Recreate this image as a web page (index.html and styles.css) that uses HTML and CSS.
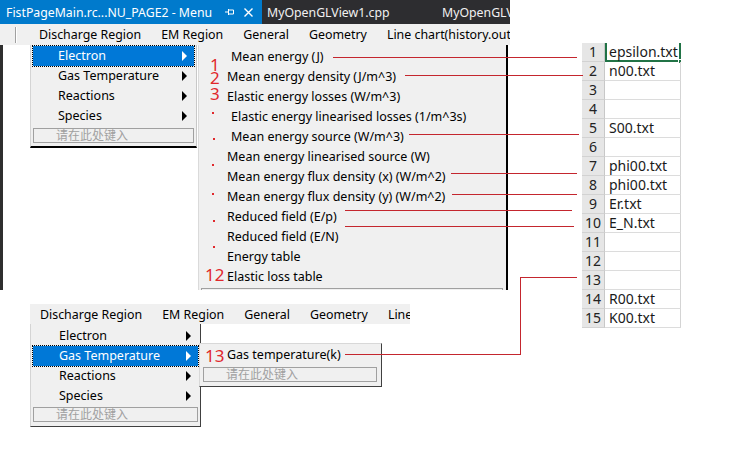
FILE: index.html
```html
<!DOCTYPE html>
<html>
<head>
<meta charset="utf-8">
<link rel="stylesheet" href="styles.css">
</head>
<body>
<div class="canvas">
  <section class="win-top">
    <div class="tabbar">
      <div class="tab active">
        <span class="tab-title">FistPageMain.rc...NU_PAGE2 - Menu</span>
        <svg class="pin" width="9" height="8" viewBox="0 0 9 8"><path d="M0 4H3M3.5 1V7M3.5 2H8.5V6H3.5" fill="none" stroke="#fff" stroke-width="1"/></svg>
        <svg class="close" width="9" height="9" viewBox="0 0 9 9"><path d="M0.5 0.5L8.5 8.5M8.5 0.5L0.5 8.5" stroke="#fff" stroke-width="1.4"/></svg>
      </div>
      <div class="tab">MyOpenGLView1.cpp</div>
      <div class="tab last">MyOpenGLView2.cpp</div>
    </div>
    <div class="menubar">
      <span class="sep"></span>
      <span>Discharge Region</span>
      <span>EM Region</span>
      <span>General</span>
      <span>Geometry</span>
      <span>Line chart(history.out)</span>
    </div>
    <div class="work">
      <div class="dropdown d1">
        <div class="dd-item sub selected">Electron</div>
        <div class="dd-item sub">Gas Temperature</div>
        <div class="dd-item sub">Reactions</div>
        <div class="dd-item sub">Species</div>
        <div class="dd-input">请在此处键入</div>
      </div>
      <div class="submenu s1">
        <div class="sm-item ind">Mean energy (J)</div>
        <div class="sm-item">Mean energy density (J/m^3)</div>
        <div class="sm-item">Elastic energy losses (W/m^3)</div>
        <div class="sm-item ind">Elastic energy linearised losses (1/m^3s)</div>
        <div class="sm-item ind">Mean energy source (W/m^3)</div>
        <div class="sm-item">Mean energy linearised source (W)</div>
        <div class="sm-item">Mean energy flux density (x) (W/m^2)</div>
        <div class="sm-item">Mean energy flux density (y) (W/m^2)</div>
        <div class="sm-item">Reduced field (E/p)</div>
        <div class="sm-item">Reduced field (E/N)</div>
        <div class="sm-item">Energy table</div>
        <div class="sm-item">Elastic loss table</div>
        <div class="sm-input"></div>
        <span class="mark m1">1</span>
        <span class="mark m2">2</span>
        <span class="mark m3">3</span>
        <span class="mark m12">12</span>
        <span class="dot d-a"></span>
        <span class="dot d-b"></span>
        <span class="dot d-c"></span>
        <span class="dot d-d"></span>
        <span class="dot d-e"></span>
        <span class="dot d-f"></span>
      </div>
    </div>
  </section>

  <div class="sheet">
    <div class="rh">1</div><div class="cell sel">epsilon.txt<span class="handle"></span></div>
    <div class="rh">2</div><div class="cell">n00.txt</div>
    <div class="rh">3</div><div class="cell"></div>
    <div class="rh">4</div><div class="cell"></div>
    <div class="rh">5</div><div class="cell">S00.txt</div>
    <div class="rh">6</div><div class="cell"></div>
    <div class="rh">7</div><div class="cell">phi00.txt</div>
    <div class="rh">8</div><div class="cell">phi00.txt</div>
    <div class="rh">9</div><div class="cell">Er.txt</div>
    <div class="rh">10</div><div class="cell">E_N.txt</div>
    <div class="rh">11</div><div class="cell"></div>
    <div class="rh">12</div><div class="cell"></div>
    <div class="rh">13</div><div class="cell"></div>
    <div class="rh">14</div><div class="cell">R00.txt</div>
    <div class="rh">15</div><div class="cell">K00.txt</div>
  </div>

  <section class="win-bottom">
    <div class="menubar mb2">
      <span>Discharge Region</span>
      <span>EM Region</span>
      <span>General</span>
      <span>Geometry</span>
      <span>Line chart(history.out)</span>
    </div>
    <div class="dropdown d2">
      <div class="dd-item sub">Electron</div>
      <div class="dd-item sub selected">Gas Temperature</div>
      <div class="dd-item sub">Reactions</div>
      <div class="dd-item sub">Species</div>
      <div class="dd-input">请在此处键入</div>
    </div>
    <div class="submenu s2">
      <div class="sm-item"><span class="num">13</span>Gas temperature(k)</div>
      <div class="sm-input">请在此处键入</div>
    </div>
  </section>

  <svg class="lines" width="756" height="452" viewBox="0 0 756 452">
    <g fill="none" stroke="#c4262e" stroke-width="1">
      <path d="M333 57.5H577"/>
      <path d="M405 75.5H583"/>
      <path d="M409 134.5H579"/>
      <path d="M451 173.5H577"/>
      <path d="M452 194.5H577"/>
      <path d="M345 210.5H572"/>
      <path d="M345 226.5H574"/>
      <path d="M345 354.5H520.5V277.5H577"/>
    </g>
  </svg>
</div>
</body>
</html>
```

FILE: styles.css
```css
* { box-sizing: border-box; margin: 0; padding: 0; }
html, body { width: 756px; height: 452px; overflow: hidden; background: #fff; }
body { font-family: "Noto Sans", "Noto Sans CJK SC", sans-serif; font-size: 12.5px; color: #000; }
.canvas { position: relative; width: 756px; height: 452px; }

/* top window */
.win-top { position: absolute; left: 0; top: 0; width: 510px; height: 290px; overflow: hidden; }
.tabbar { height: 24px; background: #2d2d30; display: flex; color: #f1f1f1; font-size: 12.3px; white-space: nowrap; }
.tab { display: flex; align-items: center; padding-left: 5px; width: 175px; flex: none; }
.tab.active { background: #007acc; color: #fff; width: 262px; padding-left: 6px; }
.tab .pin { margin-left: auto; }
.tab .close { margin: 0 9px 0 10px; }
.tab.last { width: auto; }

.menubar { height: 21px; background: #f0f0f0; display: flex; align-items: center; gap: 20px; white-space: nowrap; overflow: hidden; font-size: 12.4px; }
.menubar .sep { width: 2px; height: 16px; border-left: 1px solid #a0a0a0; border-right: 1px solid #fff; margin-left: 15px; margin-right: 2px; flex: none; }

.work { position: relative; height: 245px; background: #fff; box-shadow: inset 3px 0 #2f2f2f; }

/* dropdown menus */
.dropdown { position: absolute; background: #f0f0f0; border-left: 1px solid #d4d4d4; border-right: 1px solid #c8c8c8; border-bottom: 2px solid #000; padding: 1px 2px 0 2px; }
.d1 { left: 30px; top: 0; width: 167px; height: 103px; }
.dd-item { position: relative; height: 20px; line-height: 20px; padding-left: 25px; white-space: nowrap; }
.dd-item.sub::after { content: ""; position: absolute; right: 7px; top: 5px; border-left: 5px solid #000; border-top: 5px solid transparent; border-bottom: 5px solid transparent; }
.dd-item.selected { background: #0078d7; color: #fff; outline: 1px dotted #000; }
.dd-item.selected::after { border-left-color: #fff; }
.dd-input { margin-top: 2px; height: 15px; border: 1px solid #a0a0a0; color: #a0a0a0; padding-left: 22px; font-size: 12px; line-height: 12px; font-family: "Noto Sans CJK SC", sans-serif; }

.submenu { position: absolute; background: #f0f0f0; overflow: hidden; }
.s1 { left: 198px; top: 0; width: 310px; height: 245px; border-left: 1px solid #dadada; border-right: 2px solid #000; padding-top: 2px; }
.sm-item { height: 20px; line-height: 20px; padding-left: 28px; white-space: nowrap; }
.sm-item.ind { padding-left: 32px; }
.s1 .sm-input { margin: 1px 0 0 2px; width: 302px; height: 15px; border: 1px solid #a0a0a0; }

.mark { position: absolute; color: #e0282c; font-size: 17px; line-height: 12px; }
.m1 { left: 11px; top: 14px; }
.m2 { left: 11px; top: 27px; }
.m3 { left: 11px; top: 43px; }
.m12 { left: 6px; top: 224px; }
.dot { position: absolute; width: 2px; height: 2px; background: #e0282c; }
.d-a { left: 13px; top: 67px; }
.d-b { left: 14px; top: 93px; }
.d-c { left: 13px; top: 119px; }
.d-d { left: 13px; top: 148px; }
.d-e { left: 14px; top: 175px; }
.d-f { left: 14px; top: 201px; }

/* spreadsheet */
.sheet { position: absolute; left: 582px; top: 43px; display: grid; grid-template-columns: 23px 76px; grid-auto-rows: 19px; font-size: 14px; height: 285px; overflow: hidden; }
.rh { background: #e6e6e6; border-bottom: 1px solid #d2d2d2; border-right: 1px solid #c8c8c8; text-align: center; line-height: 18px; color: #222; }
.cell { position: relative; border-bottom: 1px solid #dcdcdc; border-right: 1px solid #d4d4d4; padding-left: 4px; line-height: 18px; color: #1a1a1a; white-space: nowrap; }
.cell::after { content: ""; position: absolute; right: -4px; top: 3px; width: 1px; height: 3px; background: #9a9a9a; }
.cell.sel { border-left: 2px solid #217346; border-right: 2px solid #217346; border-bottom: 2px solid #217346; padding-left: 2px; overflow: visible; }
.handle { position: absolute; right: -4px; bottom: -4px; width: 5px; height: 5px; background: #217346; border: 1px solid #fff; }

/* bottom window */
.win-bottom { position: absolute; left: 30px; top: 304px; width: 380px; height: 124px; }
.mb2 { height: 20px; padding-left: 10px; width: 380px; }
.d2 { left: 0; top: 20px; width: 171px; height: 103px; border-right: 1px solid #404040; border-bottom: 1px solid #404040; padding-top: 2px; }
.d2 .dd-item { padding-left: 26px; }
.d2 .dd-input { margin-top: 1px; }
.s2 { left: 169px; top: 39px; width: 183px; height: 44px; border: 1px solid #d8d8d8; border-right-color: #404040; border-bottom-color: #404040; padding-top: 1px; }
.s2 .sm-item { padding-left: 5px; display: flex; align-items: center; }
.num { display: inline-block; width: 22px; color: #e0282c; font-size: 17px; line-height: 17px; }
.s2 .sm-input { margin: 2px 0 0 3px; width: 174px; height: 15px; border: 1px solid #a0a0a0; color: #a0a0a0; padding-left: 22px; font-size: 12px; line-height: 12px; font-family: "Noto Sans CJK SC", sans-serif; }

.lines { position: absolute; left: 0; top: 0; pointer-events: none; shape-rendering: crispEdges; }
```
